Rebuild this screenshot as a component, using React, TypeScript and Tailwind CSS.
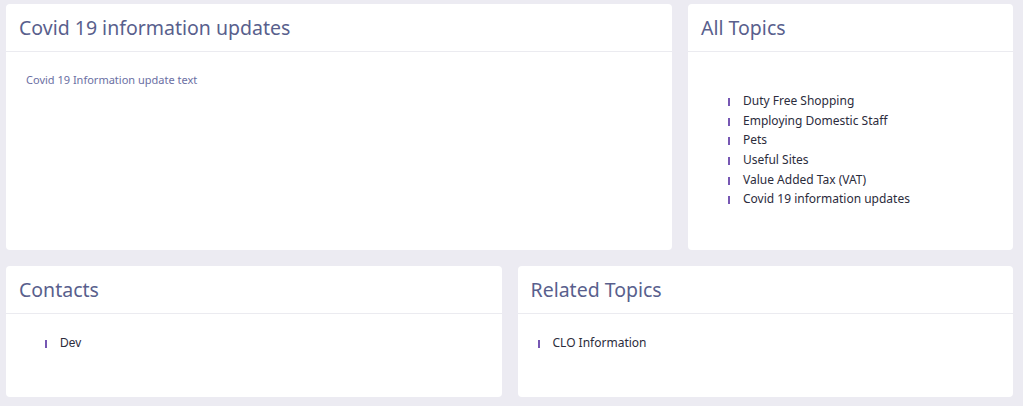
import React from 'react'

const topics = [
  'Duty Free Shopping',
  'Employing Domestic Staff',
  'Pets',
  'Useful Sites',
  'Value Added Tax (VAT)',
  'Covid 19 information updates',
]

function Card({ title, className = '', children }: { title: string; className?: string; children: React.ReactNode }) {
  return (
    <div className={`bg-white rounded-[4px] flex flex-col ${className}`}>
      <div className="h-[48px] flex items-center px-[13px] border-b border-[#ebebf0]">
        <h2 className="text-[19.5px] text-[#595f8d] leading-none">{title}</h2>
      </div>
      <div className="flex-1">{children}</div>
    </div>
  )
}

function Item({ label, textClass = '' }: { label: string; textClass?: string }) {
  return (
    <li className="flex items-center h-[19.7px]">
      <span className="w-[2px] h-[8px] bg-[#7657b3] mr-[13px] mt-[2px]" />
      <span className={`text-[12px] text-[#2c2c3c] ${textClass}`}>{label}</span>
    </li>
  )
}

export default function App() {
  return (
    <div
      className="w-[1023px] h-[406px] bg-[#ecebf2] pt-[4px] pl-[6px] pr-[10px]"
      style={{ fontFamily: '"Noto Sans", "Open Sans", sans-serif' }}
    >
      {/* Top row */}
      <div className="flex gap-4 h-[246px]">
        <Card title="Covid 19 information updates" className="w-[666px]">
          <p className="pt-[20px] pl-[20px] text-[11px] text-[#6b6fa3]">Covid 19 Information update text</p>
        </Card>
        <Card title="All Topics" className="flex-1">
          <ul className="pt-[39px] pl-[40px]">
            {topics.map((t) => (
              <Item key={t} label={t} />
            ))}
          </ul>
        </Card>
      </div>

      {/* Bottom row */}
      <div className="grid grid-cols-2 gap-4 h-[131px] mt-4">
        <Card title="Contacts">
          <ul className="pt-[19px] pl-[39px]">
            <Item label="Dev" textClass="font-['Liberation_Sans']" />
          </ul>
        </Card>
        <Card title="Related Topics">
          <ul className="pt-[19px] pl-[20px]">
            <Item label="CLO Information" />
          </ul>
        </Card>
      </div>
    </div>
  )
}
